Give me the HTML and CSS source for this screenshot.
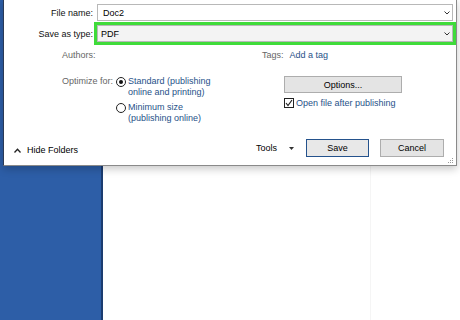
FILE: index.html
```html
<!DOCTYPE html>
<html lang="en">
  <head>
    <meta charset="UTF-8" />
    <title>Publish as PDF</title>
    <link rel="stylesheet" href="styles.css">
  </head>
  <body>
    <div class="workspace">
      <div class="sidebar"></div>
      <div class="canvas"><div class="page"></div></div>
    </div>

    <!-- Save As dialog floating over the Word window -->
    <div class="dialog">
      <div class="field">
        <label>File name:</label>
        <div class="combo">
          <span>Doc2</span>
          <svg class="chev" width="6" height="4" viewBox="0 0 6 4"><polyline points="0.5,0.5 3,3 5.5,0.5" fill="none" stroke="#333" stroke-width="1"/></svg>
        </div>
      </div>
      <div class="field">
        <label>Save as type:</label>
        <div class="combo select">
          <span>PDF</span>
          <svg class="chev" width="6" height="4" viewBox="0 0 6 4"><polyline points="0.5,0.5 3,3 5.5,0.5" fill="none" stroke="#333" stroke-width="1"/></svg>
        </div>
      </div>

      <div class="meta">
        <div class="meta-left muted">Authors:</div>
        <div class="meta-right">
          <span class="muted">Tags:</span>
          <span class="link">Add a tag</span>
        </div>
      </div>

      <div class="publish">
        <div class="optimize">
          <span class="muted opt-label">Optimize for:</span>
          <div class="radios">
            <div class="radio-row">
              <span class="radio checked"></span>
              <span class="link">Standard (publishing<br>online and printing)</span>
            </div>
            <div class="radio-row">
              <span class="radio"></span>
              <span class="link">Minimum size<br>(publishing online)</span>
            </div>
          </div>
        </div>
        <div class="extra">
          <button class="btn options">Options...</button>
          <div class="check-row">
            <span class="checkbox">
              <svg width="8" height="8" viewBox="0 0 8 8"><polyline points="1,4 3,6.5 7,1" fill="none" stroke="#222" stroke-width="1.2"/></svg>
            </span>
            <span class="link">Open file after publishing</span>
          </div>
        </div>
      </div>

      <div class="footer">
        <div class="hide">
          <svg width="7" height="5" viewBox="0 0 7 5"><polyline points="0.5,4.5 3.5,1.2 6.5,4.5" fill="none" stroke="#222" stroke-width="1.3"/></svg>
          <span>Hide Folders</span>
        </div>
        <div class="spacer"></div>
        <span class="tools">Tools</span>
        <svg class="tri" width="5" height="3" viewBox="0 0 5 3"><polygon points="0,0 5,0 2.5,3" fill="#333"/></svg>
        <button class="btn primary">Save</button>
        <button class="btn cancel">Cancel</button>
      </div>

      <svg class="grip" width="7" height="7" viewBox="0 0 7 7">
        <rect x="5" y="1" width="1" height="1" fill="#9a9a9a"/>
        <rect x="3" y="3" width="1" height="1" fill="#9a9a9a"/>
        <rect x="5" y="3" width="1" height="1" fill="#9a9a9a"/>
        <rect x="1" y="5" width="1" height="1" fill="#9a9a9a"/>
        <rect x="3" y="5" width="1" height="1" fill="#9a9a9a"/>
        <rect x="5" y="5" width="1" height="1" fill="#9a9a9a"/>
      </svg>
    </div>
  </body>
</html>
```

FILE: styles.css
```css
body {
  margin: 0;
  width: 460px;
  height: 320px;
  overflow: hidden;
  position: relative;
  font-family: "Liberation Sans", Arial, sans-serif;
  font-size: 9px;
  color: #111;
  background: #fff;
}
.workspace {
  display: flex;
  height: 320px;
}
.sidebar {
  width: 101px;
  background: #2d5ea7;
  border-right: 2px solid #1b3c70;
}
.canvas {
  flex: 1;
  background: #fff;
}
.page {
  width: 267px;
  height: 100%;
  border-right: 1px solid #f5f5f5;
}

.dialog {
  position: absolute;
  top: -1px;
  left: 3px;
  width: 454px;
  height: 167px;
  box-sizing: border-box;
  border: 1px solid #8a8a8a;
  border-left-color: #2b3a55;
  background: #fff;
  box-shadow: 0 3px 8px rgba(0, 0, 0, 0.22);
  padding: 4px 3px 0 0;
  display: flex;
  flex-direction: column;
}
.field {
  display: grid;
  grid-template-columns: 89px 1fr;
  column-gap: 4px;
  align-items: center;
}
.field + .field {
  margin-top: 4px;
}
.field label {
  text-align: right;
  color: #111;
}
.combo {
  height: 17px;
  box-sizing: border-box;
  border: 1px solid #b8b8b8;
  display: flex;
  align-items: center;
  justify-content: space-between;
  padding: 0 2px 0 5px;
  color: #000;
}
.combo.select {
  background: #f3f3f3;
  outline: 3px solid #3fdb3a;
  padding-left: 3px;
}
.muted {
  color: #666;
}
.link {
  color: #1f5189;
}
.meta {
  display: flex;
  margin-top: 7px;
  padding-left: 58px;
  line-height: 12px;
}
.meta-left {
  width: 200px;
}
.meta-right {
  display: flex;
  gap: 6px;
}
.publish {
  display: flex;
  margin-top: 15px;
  padding-left: 58px;
}
.optimize {
  display: flex;
  width: 200px;
  line-height: 11px;
}
.opt-label {
  width: 54px;
}
.radio-row {
  display: flex;
}
.radio-row + .radio-row {
  margin-top: 4px;
}
.radio {
  width: 10px;
  height: 10px;
  box-sizing: border-box;
  border: 1px solid #222;
  border-radius: 50%;
  margin: 1px 2px 0 0;
  position: relative;
}
.radio.checked::after {
  content: "";
  position: absolute;
  left: 2px;
  top: 2px;
  width: 4px;
  height: 4px;
  border-radius: 50%;
  background: #111;
}
.extra {
  padding-left: 22px;
}
.btn {
  font-family: inherit;
  font-size: 9px;
  color: #000;
  background: #e4e4e4;
  border: 1px solid #adadad;
  padding: 0;
  box-sizing: border-box;
}
.options {
  display: block;
  width: 118px;
  height: 17px;
}
.check-row {
  display: flex;
  align-items: center;
  margin-top: 5px;
}
.checkbox {
  width: 10px;
  height: 10px;
  box-sizing: border-box;
  border: 1px solid #222;
  display: flex;
  align-items: center;
  justify-content: center;
  margin-right: 2px;
}
.footer {
  margin-top: auto;
  margin-bottom: 8px;
  height: 18px;
  display: flex;
  align-items: center;
  padding: 0 9px 0 10px;
}
.hide {
  display: flex;
  align-items: center;
  gap: 6px;
  margin-top: 4px;
  color: #000;
}
.spacer {
  flex: 1;
}
.tools {
  color: #000;
}
.tri {
  margin: 0 12px 0 12px;
}
.btn.primary {
  width: 63px;
  height: 18px;
  border-color: #24528c;
  background: #e8e8e8;
}
.btn.cancel {
  width: 64px;
  height: 18px;
  margin-left: 11px;
}
.grip {
  position: absolute;
  right: 2px;
  bottom: 1px;
}
```
